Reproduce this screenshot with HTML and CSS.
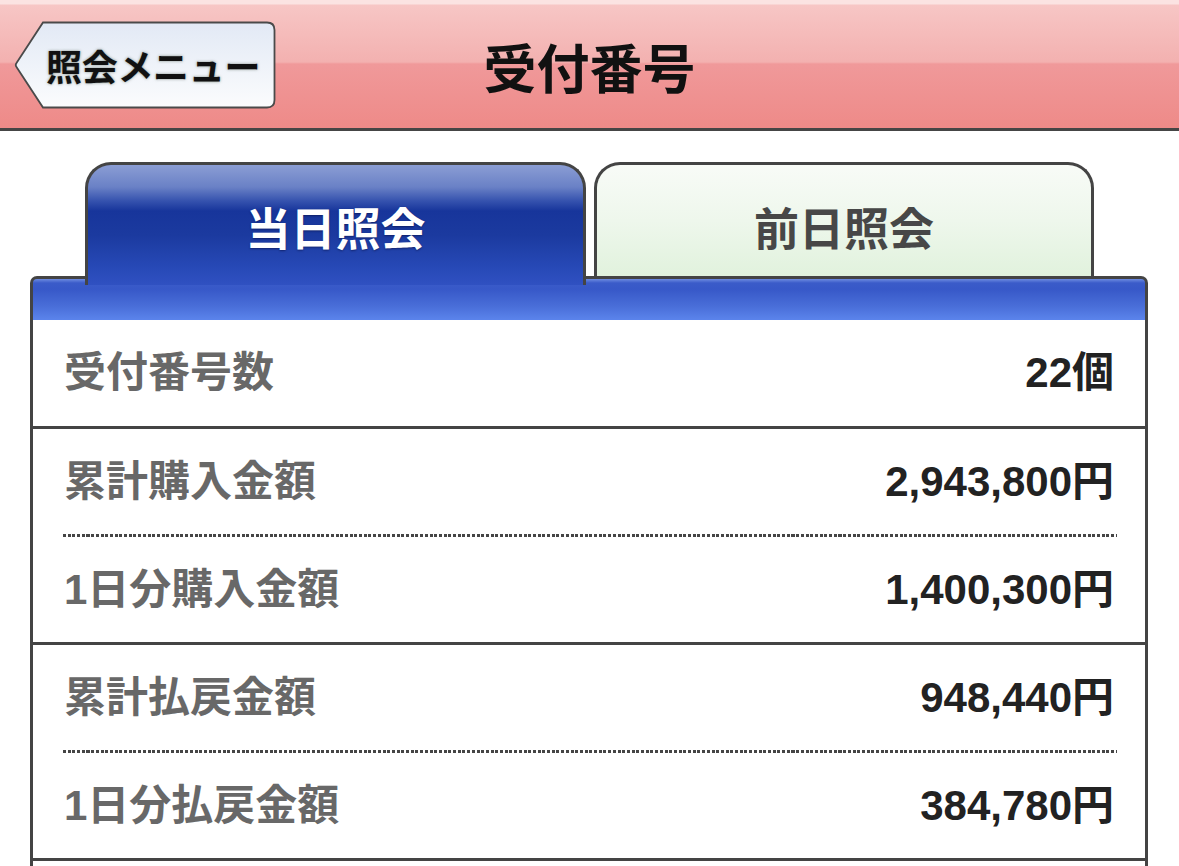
FILE: index.html
```html
<!DOCTYPE html>
<html lang="ja">
<head>
<meta charset="utf-8">
<title>受付番号</title>
<link rel="stylesheet" href="styles.css">
</head>
<body>
<header class="topbar">
  <div class="topbar-left">
    <a class="back-btn" href="#">
      <svg class="back-shape" viewBox="0 0 262 88" preserveAspectRatio="none" aria-hidden="true">
        <defs>
          <linearGradient id="bg" x1="0" y1="0" x2="0" y2="1">
            <stop offset="0" stop-color="#e2e9f5"/>
            <stop offset="1" stop-color="#fbfcfd"/>
          </linearGradient>
        </defs>
        <path d="M29 1.5 L253 1.5 Q260.5 1.5 260.5 9 L260.5 79 Q260.5 86.5 253 86.5 L29 86.5 L2.5 46 Q1 44 2.5 42 Z" fill="url(#bg)" stroke="#4a4a4a" stroke-width="1.8"/>
      </svg>
      <span class="back-text">照会メニュー</span>
    </a>
  </div>
  <h1 class="title">受付番号</h1>
  <div class="topbar-right"></div>
</header>

<main class="panel">
  <div class="tabs">
    <div class="tab tab-active">当日照会</div>
    <div class="tab tab-idle">前日照会</div>
  </div>
  <div class="tabbar"></div>
  <div class="box">
    <div class="group">
      <div class="row"><span class="label">受付番号数</span><span class="value">22個</span></div>
    </div>
    <div class="group">
      <div class="row"><span class="label">累計購入金額</span><span class="value">2,943,800円</span></div>
      <div class="dots"></div>
      <div class="row"><span class="label">1日分購入金額</span><span class="value">1,400,300円</span></div>
    </div>
    <div class="group">
      <div class="row"><span class="label">累計払戻金額</span><span class="value">948,440円</span></div>
      <div class="dots"></div>
      <div class="row"><span class="label">1日分払戻金額</span><span class="value">384,780円</span></div>
    </div>
    <div class="tail"></div>
  </div>
</main>
</body>
</html>
```

FILE: styles.css
```css
html, body {
  margin: 0;
  padding: 0;
  background: #ffffff;
}
body {
  font-family: "Liberation Sans", "Noto Sans CJK JP", sans-serif;
  font-weight: 700;
  overflow: hidden;
  height: 866px;
}

/* ---------- top bar ---------- */
.topbar {
  display: grid;
  grid-template-columns: 1fr auto 1fr;
  align-items: center;
  height: 128px;
  border-bottom: 3px solid #454545;
  background: linear-gradient(to bottom,
    #fbe3e2 0px, #fbe3e2 4px,
    #f7c6c5 5px, #f3b1b0 62px,
    #f0999a 64px, #ee8a88 128px);
}
.topbar-left {
  display: flex;
  align-items: center;
  padding-left: 14px;
}
.back-btn {
  position: relative;
  display: flex;
  align-items: center;
  width: 262px;
  height: 88px;
  margin-top: 2px;
  text-decoration: none;
}
.back-shape {
  position: absolute;
  left: 0;
  top: 0;
  width: 100%;
  height: 100%;
}
.back-text {
  position: relative;
  padding-left: 32px;
  font-family: "Noto Sans CJK JP", sans-serif;
  font-size: 36px;
  font-weight: 700;
  line-height: 1;
  color: #111;
  text-shadow: 0 0 3px rgba(40, 60, 40, 0.55);
  letter-spacing: -0.3px;
}
.title {
  margin: 0;
  font-family: "Noto Sans CJK JP", sans-serif;
  font-size: 53px;
  font-weight: 700;
  line-height: 1;
  color: #111;
  padding-top: 4px;
}

/* ---------- panel ---------- */
.panel {
  margin: 31px 31px 0 30px;
}
.tabs {
  display: flex;
  align-items: flex-start;
  gap: 8px;
  height: 114px;
  padding-left: 55px;
}
.tab {
  box-sizing: border-box;
  width: 501px;
  text-align: center;
  font-family: "Noto Sans CJK JP", sans-serif;
  font-size: 45px;
  font-weight: 700;
  line-height: 1;
  padding-top: 39px;
  border: 3px solid #444;
  border-bottom: none;
  border-radius: 26px 26px 0 0;
}
.tab-active {
  position: relative;
  z-index: 2;
  height: 123px;
  color: #fff;
  text-shadow: 0 1px 2px rgba(0, 0, 40, 0.45);
  background: linear-gradient(to bottom,
    #8b9dd4 0px, #6a81c6 22px, #3552ae 36px,
    #17359b 46px, #1b3a9f 70px, #2648b5 100px, #3051c2 121px);
}
.tab-idle {
  width: 500px;
  height: 114px;
  color: #474747;
  background: linear-gradient(to bottom, #f8fbf7 0%, #eef7ec 50%, #e1f2dd 100%);
}
.tabbar {
  box-sizing: border-box;
  height: 44px;
  border: 3px solid #444;
  border-bottom: none;
  border-radius: 7px 7px 0 0;
  background: linear-gradient(to bottom,
    #6d8be0 0px, #3a5bc9 4px, #3758c8 10px, #4a6fd9 28px, #5b84ec 41px);
}

/* ---------- data box ---------- */
.box {
  border-left: 3px solid #444;
  border-right: 3px solid #444;
}
.group {
  border-top: 3px solid #444;
}
.group:first-child {
  border-top: none;
}
.row {
  display: flex;
  align-items: center;
  justify-content: space-between;
  height: 105px;
  padding: 0 31px 0 31px;
}
.group:first-child .row {
  height: 106px;
}
.label {
  font-size: 42px;
  line-height: 1;
  color: #686868;
}
.value {
  font-size: 42px;
  line-height: 1;
  color: #222;
}
.dots {
  margin: 0 28px 0 30px;
  height: 3px;
  background-image: repeating-linear-gradient(to right, #454545 0px, #454545 3px, transparent 3px, transparent 4.7px);
}
.tail {
  border-top: 3px solid #444;
  height: 40px;
}
```
